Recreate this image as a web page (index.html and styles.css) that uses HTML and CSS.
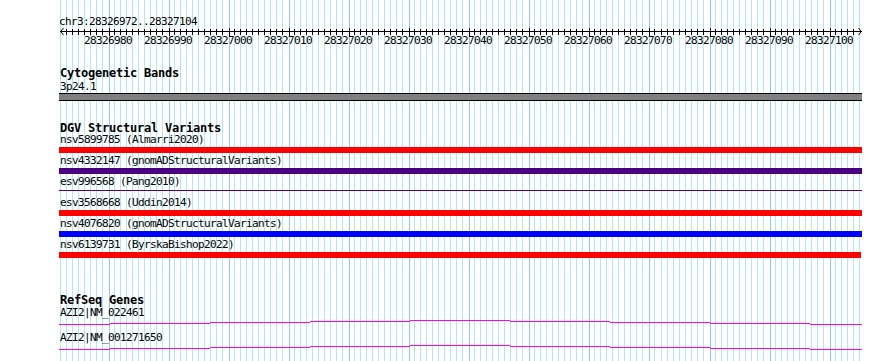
FILE: index.html
```html
<!DOCTYPE html>
<html lang="en">
<head>
    <meta charset="UTF-8">
    <title>chr3:28326972..28327104</title>
    <link rel="stylesheet" href="styles.css">
</head>
<body>
    <div class="view">
        <svg class="grid" id="grid" width="890" height="361"></svg>

        <div class="ruler">
            <div class="ruler-label">chr3:28326972..28327104</div>
            <svg class="axis" id="axis" width="890" height="21">
                <rect x="60" y="4" width="802" height="1"></rect>
                <path class="arrow" d="M63.5 1 L60.5 4.5 L63.5 8 M858.5 1 L861.5 4.5 L858.5 8"></path>
                <g class="tick-labels">
                    <text x="84" y="17">28326980</text>
                    <text x="144" y="17">28326990</text>
                    <text x="204" y="17">28327000</text>
                    <text x="264" y="17">28327010</text>
                    <text x="324" y="17">28327020</text>
                    <text x="384" y="17">28327030</text>
                    <text x="444" y="17">28327040</text>
                    <text x="504" y="17">28327050</text>
                    <text x="564" y="17">28327060</text>
                    <text x="624" y="17">28327070</text>
                    <text x="685" y="17">28327080</text>
                    <text x="745" y="17">28327090</text>
                    <text x="805" y="17">28327100</text>
                </g>
            </svg>
        </div>

        <div class="track track-cyto">
            <div class="track-title">Cytogenetic Bands</div>
            <div class="feature-label">3p24.1</div>
            <div class="band"></div>
        </div>

        <div class="track track-dgv">
            <div class="track-title">DGV Structural Variants</div>
            <div class="feature">
                <div class="feature-label">nsv5899785 (Almarri2020)</div>
                <div class="bar red"></div>
            </div>
            <div class="feature">
                <div class="feature-label">nsv4332147 (gnomADStructuralVariants)</div>
                <div class="bar purple"></div>
            </div>
            <div class="feature">
                <div class="feature-label">esv996568 (Pang2010)</div>
                <div class="bar thin"></div>
            </div>
            <div class="feature">
                <div class="feature-label">esv3568668 (Uddin2014)</div>
                <div class="bar red"></div>
            </div>
            <div class="feature">
                <div class="feature-label">nsv4076820 (gnomADStructuralVariants)</div>
                <div class="bar blue"></div>
            </div>
            <div class="feature">
                <div class="feature-label">nsv6139731 (ByrskaBishop2022)</div>
                <div class="bar red short"></div>
            </div>
        </div>

        <div class="track track-genes">
            <div class="track-title">RefSeq Genes</div>
            <div class="transcript">
                <div class="feature-label">AZI2|NM_022461</div>
                <svg class="intron" width="803" height="14"></svg>
            </div>
            <div class="transcript">
                <div class="feature-label">AZI2|NM_001271650</div>
                <svg class="intron" width="803" height="14"></svg>
            </div>
        </div>
    </div>

    <script>
        var NS = 'http://www.w3.org/2000/svg';
        var START = 28326972;
        var END = 28327104;
        var SCALE = 6.01;

        function xOf(i) {
            return Math.floor(60 + i * SCALE);
        }

        function addRect(svg, x, y, w, h, cls) {
            var r = document.createElementNS(NS, 'rect');
            r.setAttribute('x', x);
            r.setAttribute('y', y);
            r.setAttribute('width', w);
            r.setAttribute('height', h);
            if (cls) r.setAttribute('class', cls);
            svg.appendChild(r);
        }

        // one line per base, a darker one every 10 bp
        var grid = document.getElementById('grid');
        var axis = document.getElementById('axis');
        for (var i = 0; i <= END - START + 1; i++) {
            var major = (START + i) % 10 === 0;
            var x = xOf(i) + (major ? 1 : 0);
            addRect(grid, x, 0, 1, 361, major ? 'grid-major' : 'grid-minor');
            if (i > 0 && i < END - START + 1) {
                if (major) addRect(axis, x, 1, 1, 8);
                else addRect(axis, x, 2, 1, 6);
            }
        }

        // intron drawn as a shallow arch, stepping 1px every 100px
        var steps = [[0, 51, 6], [51, 100, 5], [151, 100, 4], [251, 100, 3], [351, 100, 2],
                     [451, 100, 3], [551, 100, 4], [651, 100, 5], [751, 52, 6]];
        document.querySelectorAll('.intron').forEach(function (svg) {
            steps.forEach(function (s) {
                addRect(svg, s[0], s[2], s[1], 1);
            });
        });
    </script>
</body>
</html>
```

FILE: styles.css
```css
body {
    margin: 0;
    background-color: #fff;
}
.view {
    position: relative;
    z-index: 0;
    width: 890px;
    height: 361px;
    overflow: hidden;
    font-family: "DejaVu Sans Mono", "Liberation Mono", monospace;
    font-size: 11px;
    line-height: 11px;
    letter-spacing: -0.62px;
    color: #000;
}
.grid {
    position: absolute;
    left: 0;
    top: 0;
    z-index: -1;
}
.grid-minor {
    fill: #aeeaee;
}
.grid-major {
    fill: #8ec8ee;
}
.ruler-label {
    padding-top: 16px;
    padding-left: 59px;
}
.axis {
    display: block;
}
.axis rect {
    fill: #000;
}
.axis .arrow {
    fill: none;
    stroke: #000;
    stroke-width: 1;
}
.tick-labels text {
    font-family: "DejaVu Sans Mono", monospace;
    font-size: 11px;
    letter-spacing: -0.62px;
    fill: #000;
}
.track {
    padding-left: 59px;
}
.track-title {
    font-weight: bold;
    font-size: 12px;
    letter-spacing: -0.22px;
    padding-left: 1px;
}
.feature-label {
    padding-left: 1px;
    white-space: nowrap;
}
.track-cyto {
    margin-top: 20px;
}
.track-cyto .track-title {
    margin-bottom: 2px;
}
.band {
    width: 803px;
    height: 6px;
    margin-top: 1px;
    background-color: #808080;
    border-top: 1px solid #000;
    border-bottom: 1px solid #000;
}
.track-dgv {
    margin-top: 22px;
}
.feature {
    height: 21px;
}
.bar {
    width: 803px;
    height: 6px;
    margin-top: 2px;
}
.bar.red {
    background-color: #f00;
}
.bar.purple {
    background-color: #4b0082;
}
.bar.blue {
    background-color: #00f;
}
.bar.thin {
    height: 1px;
    margin-top: 3px;
    background-color: #4b0082;
}
.bar.short {
    width: 802px;
}
.track-genes {
    margin-top: 35px;
}
.track-genes .track-title {
    margin-bottom: 1px;
}
.transcript {
    height: 25px;
}
.intron {
    display: block;
}
.intron rect {
    fill: #f0f;
}
```
